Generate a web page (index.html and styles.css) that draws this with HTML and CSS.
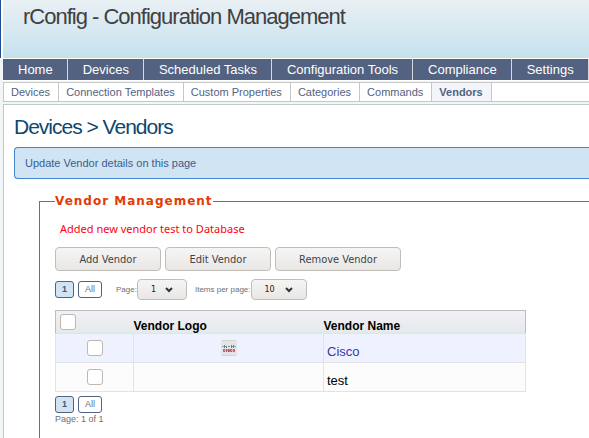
FILE: index.html
```html
<!DOCTYPE html>
<html lang="en">
<head>
<meta charset="utf-8">
<title>rConfig - Configuration Management</title>
<link rel="stylesheet" href="styles.css">
</head>
<body>
<header class="banner"><h1>rConfig - Configuration Management</h1></header>
<div class="wrap">
<nav class="mainnav" aria-label="Main">
<a href="#">Home</a><a href="#">Devices</a><a href="#">Scheduled Tasks</a><a href="#">Configuration Tools</a><a href="#">Compliance</a><a href="#">Settings</a>
</nav>
<nav class="subnav" aria-label="Devices">
<a href="#">Devices</a><a href="#">Connection Templates</a><a href="#">Custom Properties</a><a href="#">Categories</a><a href="#">Commands</a><a href="#" class="current" aria-current="page">Vendors</a>
</nav>
<main class="content">
<h2>Devices &gt; Vendors</h2>
<p class="notice">Update Vendor details on this page</p>
<fieldset class="panel">
<legend>Vendor Management</legend>
<p class="message">Added new vendor test to Database</p>
<div class="actions">
<button type="button" class="add">Add Vendor</button>
<button type="button" class="edit">Edit Vendor</button>
<button type="button" class="remove">Remove Vendor</button>
</div>
<div class="paging">
<div class="pages"><a href="#" class="on">1</a><a href="#">All</a></div>
<div class="picker">
<label for="page">Page:</label>
<span class="select"><select id="page"><option>1</option></select><svg viewBox="0 0 8 6"><path d="M1 1l3 3 3-3"/></svg></span>
</div>
<div class="picker">
<label for="items">Items per page:</label>
<span class="select wide"><select id="items"><option>10</option></select><svg viewBox="0 0 8 6"><path d="M1 1l3 3 3-3"/></svg></span>
</div>
</div>
<table class="vendors">
<colgroup><col class="c-check"><col class="c-logo"><col class="c-name"></colgroup>
<thead><tr><th class="all"><input type="checkbox" aria-label="Select all vendors"></th><th>Vendor Logo</th><th>Vendor Name</th></tr></thead>
<tbody>
<tr class="odd"><td><input type="checkbox" aria-label="Select Cisco"></td><td>
<svg class="logo" viewBox="0 0 16 16" role="img" aria-label="Cisco">
<rect width="16" height="16" rx="2" fill="#e3e4e6"/>
<path d="M1 .5h14M1 15.500h14" stroke="#cfd3d6"/>
<path d="M1 6.500h14" stroke="#98a5ab" stroke-dasharray="2 1"/>
<path d="M3.500 5v3M5.500 6v2M8 6v1M10.500 5v3M12.500 5v3" stroke="#6b7c84"/>
<path d="M2.500 9.500h11v2h-11z" fill="#d8a2ab"/>
<path d="M4 9.500H2.500v2H4M5.500 9v3M8.500 9.500H7v1h1.500v1H7M11 9.500H9.500v2H11M12.500 9.500h1v2h-1z" fill="none" stroke="#b9586a"/>
</svg></td><td><a href="#">Cisco</a></td></tr>
<tr><td><input type="checkbox" aria-label="Select test"></td><td></td><td>test</td></tr>
</tbody>
</table>
<div class="pages"><a href="#" class="on">1</a><a href="#">All</a></div>
<p class="count">Page: 1 of 1</p>
</fieldset>
</main>
</div>
</body>
</html>
```
FILE: styles.css
```css
* { box-sizing: border-box; }
body {
  display: flex;
  flex-direction: column;
  min-height: 100vh;
  margin: 0;
  background: #f3f6f7;
  color: #000;
  font-family: "Liberation Sans", Arial, sans-serif;
  font-size: 13px;
  overflow-x: hidden;
}
h1, h2, p { margin: 0; font-weight: normal; }
a { text-decoration: none; }

.banner {
  height: 58px;
  padding: 4px 20px;
  border-left: 1px solid #1f4f96;
  box-shadow: inset 2px 0 #fff;
  background: linear-gradient(#e9f0f4, #cde4f0 80%, #c5e1ea);
}
.banner h1 { font-size: 22px; line-height: 26px; letter-spacing: -1px; color: #404040; padding-left: 2px; }

.wrap { display: flex; flex: 1; flex-direction: column; padding-left: 3px; }
.mainnav {
  display: flex;
  border-top: 1px solid #fff;
  border-bottom: 1px solid #fff;
  background: #536281;
}
.mainnav a {
  flex: none;
  padding: 0 14px 0 15px;
  border-right: 1px solid #d5d8e0;
  color: #fff;
  line-height: 21px;
}
.subnav {
  display: flex;
  margin-top: 1px;
  border: 1px solid #c6c8c8;
  border-right: 0;
  background: #fff;
}
.subnav a {
  flex: none;
  padding: 0 8px 0 7px;
  border-right: 1px solid #c6c8c8;
  color: #536281;
  font-size: 11px;
  line-height: 18px;
}
.subnav .current { background: #f4f5fa; font-weight: bold; }

.content {
  display: flex;
  flex: 1;
  flex-direction: column;
  margin-top: 2px;
  padding: 9px 0 0 10px;
  border: 1px solid #bccaca;
  border-width: 1px 0 0 1px;
  background: #fff;
}
.content h2 { font-size: 21px; line-height: 26px; letter-spacing: -1px; color: #0b476f; }
.notice {
  margin-top: 7px;
  padding: 0 10px;
  border: 1px solid #4286c9;
  border-right: 0;
  border-radius: 4px 0 0 4px;
  background: #d1e4f3;
  color: #36608f;
  font-size: 11px;
  line-height: 30px;
}

.panel {
  flex: 1;
  margin: 14px 0 0 25px;
  padding: 12px 15px 0;
  border: 1px solid #707070;
  border-width: 1px 0 0 1px;
  min-width: 0;
}
.panel legend {
  padding: 0;
  color: #e33b06;
  font: bold 12px/16px "DejaVu Sans", sans-serif;
  letter-spacing: 1px;
}
.message { padding-left: 5px; color: #ff0010; font: 11px/16px "Noto Sans", sans-serif; }

.actions { display: flex; gap: 4px; margin-top: 10px; }
.actions button {
  height: 24px;
  padding: 0;
  border: 1px solid #c3bdb8;
  border-radius: 4px;
  background: linear-gradient(#f6f5f4, #e9e7e6);
  color: #404448;
  font: 11px "DejaVu Sans Condensed", "DejaVu Sans", sans-serif;
}
.actions .add, .actions .edit { width: 106px; }
.actions .remove { width: 126px; }

.paging { display: flex; align-items: center; margin-top: 8px; }
.pages { display: flex; gap: 4px; }
.pages a {
  padding: 0 6px;
  border: 1px solid #536281;
  border-radius: 3px;
  background: #fff;
  color: #60708f;
  font-size: 9px;
  line-height: 15px;
}
.pages .on { background: #d1e4f3; color: #465878; font-weight: bold; }
.picker { display: flex; align-items: center; margin-left: 14px; }
.picker + .picker { margin-left: 8px; }
.picker label { color: #707070; font-size: 8px; }
.select { position: relative; width: 50px; }
.select.wide { width: 56px; }
.select select {
  appearance: none;
  display: block;
  width: 100%;
  height: 21px;
  padding: 0 13px;
  border: 1px solid #c3bdb8;
  border-radius: 4px;
  background: linear-gradient(#f6f5f4, #e9e7e6);
  color: #202020;
  font: 8px "DejaVu Sans", sans-serif;
}
.select svg {
  position: absolute;
  top: 8px;
  right: 14px;
  width: 8px;
  height: 6px;
  fill: none;
  stroke: #30363a;
  stroke-width: 2;
  pointer-events: none;
}

.vendors {
  width: 471px;
  max-width: 100%;
  margin-top: 10px;
  table-layout: fixed;
  border-collapse: collapse;
}
.c-check { width: 78px; }
.c-logo { width: 190px; }
.vendors th {
  height: 23px;
  padding: 8px 0 0;
  font-size: 12px;
  line-height: 14px;
  text-align: left;
}
.vendors thead tr { background: linear-gradient(#f2f0f6, #e3e9e9); }
.vendors thead { border: 1px solid #bcbcc4; }
.vendors th.all { padding: 3px 0 3px 4px; }
.vendors td {
  height: 29px;
  padding: 0 3px;
  border: 1px solid #e1e3e6;
  background: #fcfcfc;
  text-align: center;
}
.vendors td:last-child { padding-top: 6px; text-align: left; }
.vendors .odd td { background: #eef2ff; }
.vendors a { color: #3b36a8; }
.vendors input {
  appearance: none;
  display: block;
  width: 16px;
  height: 16px;
  margin: 0;
  border: 1px solid #bfb8b1;
  border-radius: 3px;
  background: #fff;
}
.vendors td input { margin: 0 auto; }
.logo { display: block; width: 16px; height: 16px; margin: 0 auto; }
.vendors + .pages { margin-top: 4px; }
.count { color: #707070; font-size: 9px; line-height: 12px; }
```
